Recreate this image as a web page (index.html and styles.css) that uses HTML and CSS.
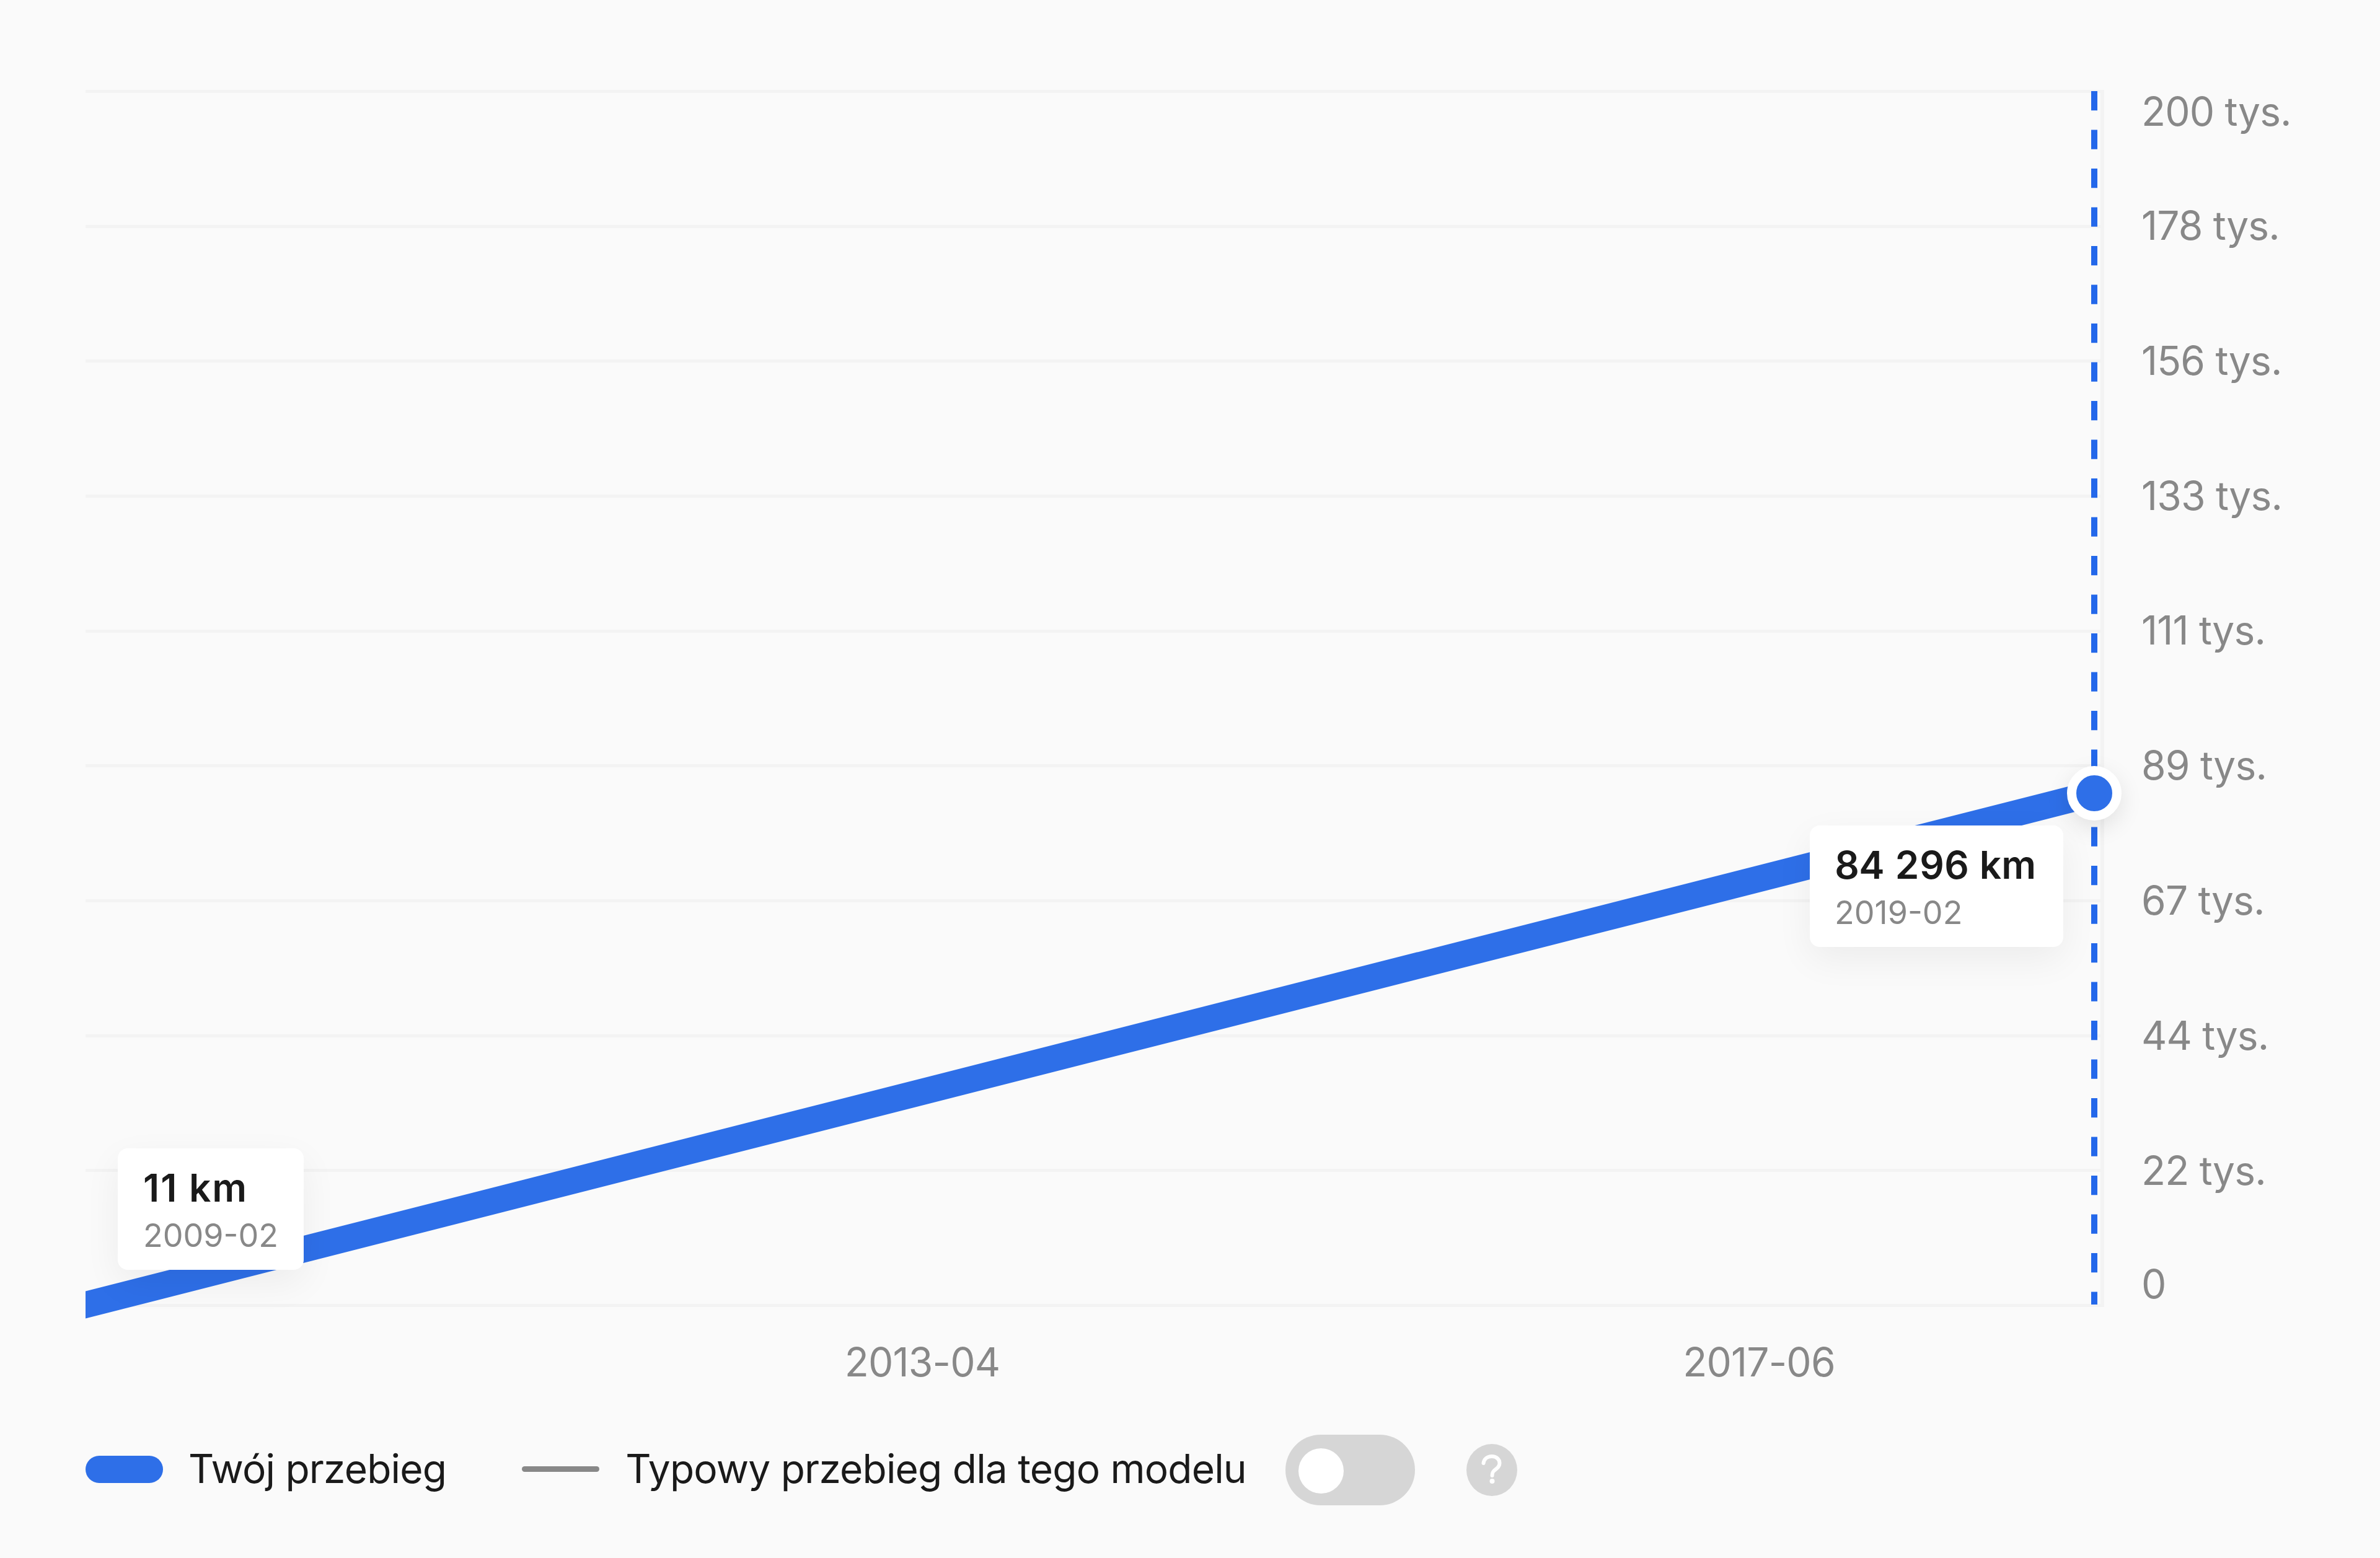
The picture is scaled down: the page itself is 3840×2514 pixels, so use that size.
FILE: index.html
```html
<!DOCTYPE html>
<html lang="pl">
<head>
<meta charset="utf-8">
<title>Przebieg</title>
<link rel="stylesheet" href="styles.css">
</head>
<body>
<main class="page">
  <section class="chart-row">
    <div class="plot">
      <div class="grid">
        <div class="grid-line"></div><div class="grid-line"></div><div class="grid-line"></div>
        <div class="grid-line"></div><div class="grid-line"></div><div class="grid-line"></div>
        <div class="grid-line"></div><div class="grid-line"></div><div class="grid-line"></div>
        <div class="grid-line"></div>
      </div>
      <svg class="series" width="3300" height="2000" viewBox="0 0 3300 2000">
        <line class="series-cursor" x1="3241" y1="2" x2="3241" y2="1960"></line>
        <line class="series-line" x1="-100" y1="1985.96" x2="3242" y2="1135"></line>
      </svg>
      <div class="dot"></div>
      <div class="tip tip-start">
        <div class="tip-value">11 km</div>
        <div class="tip-date">2009-02</div>
      </div>
      <div class="tip tip-end">
        <div class="tip-value">84 296 km</div>
        <div class="tip-date">2019-02</div>
      </div>
    </div>
    <div class="y-axis">
      <div class="tick">200 tys.</div>
      <div class="tick tick-second">178 tys.</div>
      <div class="tick">156 tys.</div>
      <div class="tick">133 tys.</div>
      <div class="tick">111 tys.</div>
      <div class="tick">89 tys.</div>
      <div class="tick">67 tys.</div>
      <div class="tick">44 tys.</div>
      <div class="tick">22 tys.</div>
      <div class="tick tick-last">0</div>
    </div>
  </section>
  <div class="x-axis">
    <div class="x-tick">2013-04</div>
    <div class="x-tick">2017-06</div>
  </div>
  <div class="legend">
    <span class="swatch-own"></span>
    <span class="legend-label label-own">Twój przebieg</span>
    <span class="swatch-typical"></span>
    <span class="legend-label label-typical">Typowy przebieg dla tego modelu</span>
    <span class="toggle"><span class="knob"></span></span>
    <svg class="help" width="82" height="84" viewBox="0 0 82 84">
      <ellipse cx="41" cy="42" rx="41" ry="42" fill="#d6d6d6"></ellipse>
      <path d="M27.5 31 C28.5 24 34 20 41 20 C48.5 20 53.500 25 53.500 31 C53.500 36 50.500 38.500 46.500 41.500 C43 44 41.500 46 41.500 51" fill="none" stroke="#fff" stroke-width="6" stroke-linecap="round"></path>
      <circle cx="41.500" cy="60" r="4" fill="#fff"></circle>
    </svg>
  </div>
</main>
</body>
</html>
```

FILE: styles.css
```css
html, body {
  margin: 0;
  padding: 0;
  background: #fafafa;
}

.page {
  width: 3840px;
  height: 2514px;
  padding-top: 145px;
  box-sizing: border-box;
  overflow: hidden;
  font-family: Inter, "Liberation Sans", sans-serif;
  background: #fafafa;
}

.chart-row {
  display: flex;
  padding-left: 138px;
}

.plot {
  position: relative;
  width: 3257px;
  height: 1964px;
  flex: none;
}

.grid {
  display: flex;
  flex-direction: column;
  justify-content: space-between;
  height: 100%;
  border-right: 6px solid #f3f3f3;
  box-sizing: border-box;
}

.grid-line {
  height: 5px;
  background: #f3f3f3;
}

.series {
  position: absolute;
  left: 0;
  top: 0;
}

.series-cursor {
  stroke: #2468ea;
  stroke-width: 10;
  stroke-dasharray: 31.25 31.25;
}

.series-line {
  stroke: #2e6fe8;
  stroke-width: 42.5;
}

.dot {
  position: absolute;
  left: 3197px;
  top: 1091px;
  width: 58px;
  height: 58px;
  border: 15px solid #fff;
  border-radius: 50%;
  background: #2e6fe8;
  box-shadow: 0 12px 36px rgba(0, 0, 0, 0.1);
}

.tip {
  position: absolute;
  box-sizing: border-box;
  height: 196px;
  padding: 26px 40px 0;
  background: #fff;
  border-radius: 16px;
  box-shadow: 0 20px 60px rgba(0, 0, 0, 0.06);
}

.tip-start {
  left: 52px;
  top: 1708px;
  width: 300px;
  padding-left: 41px;
}

.tip-end {
  left: 2782px;
  top: 1187px;
  width: 409px;
}

.tip-value {
  font-size: 62px;
  line-height: 76px;
  font-weight: 600;
  font-variant-numeric: tabular-nums;
  color: #1a1a1a;
}

.tip-start .tip-value {
  font-variant-numeric: normal;
  letter-spacing: 2px;
}

.tip-date {
  font-size: 52px;
  line-height: 78px;
  color: #888;
}

.y-axis {
  flex: none;
  margin-left: 60px;
  margin-top: -4px;
}

.tick {
  font-size: 64px;
  line-height: 78px;
  letter-spacing: -0.8px;
  color: #888;
  margin-top: 139.8px;
}

.tick:first-child {
  margin-top: 0;
}

.tick-second {
  margin-top: 106px;
}

.tick-last {
  margin-top: 105px;
}

.x-axis {
  display: flex;
  margin-top: 48px;
  padding-left: 813px;
}

.x-tick {
  width: 1350px;
  text-align: center;
  font-size: 64px;
  line-height: 78px;
  letter-spacing: -0.8px;
  color: #888;
}

.legend {
  display: flex;
  align-items: center;
  height: 114px;
  margin-top: 78px;
  padding-left: 138px;
}

.swatch-own {
  width: 125px;
  height: 44px;
  margin-bottom: 2px;
  border-radius: 22px;
  background: #2e6fe8;
}

.legend-label {
  font-size: 64px;
  line-height: 78px;
  letter-spacing: -0.8px;
  margin-bottom: 3px;
  color: #1a1a1a;
  white-space: nowrap;
}

.label-own {
  margin-left: 41px;
}

.swatch-typical {
  width: 125px;
  height: 9px;
  margin-left: 122px;
  margin-bottom: 2px;
  border-radius: 5px;
  background: #888;
}

.label-typical {
  margin-left: 42px;
}

.toggle {
  display: flex;
  align-items: center;
  width: 209px;
  height: 114px;
  margin-left: 63px;
  padding-left: 21px;
  box-sizing: border-box;
  border-radius: 57px;
  background: #d6d6d6;
}

.knob {
  width: 73px;
  height: 73px;
  margin-top: 4px;
  border-radius: 50%;
  background: #fff;
}

.help {
  margin-left: 83px;
}
```
